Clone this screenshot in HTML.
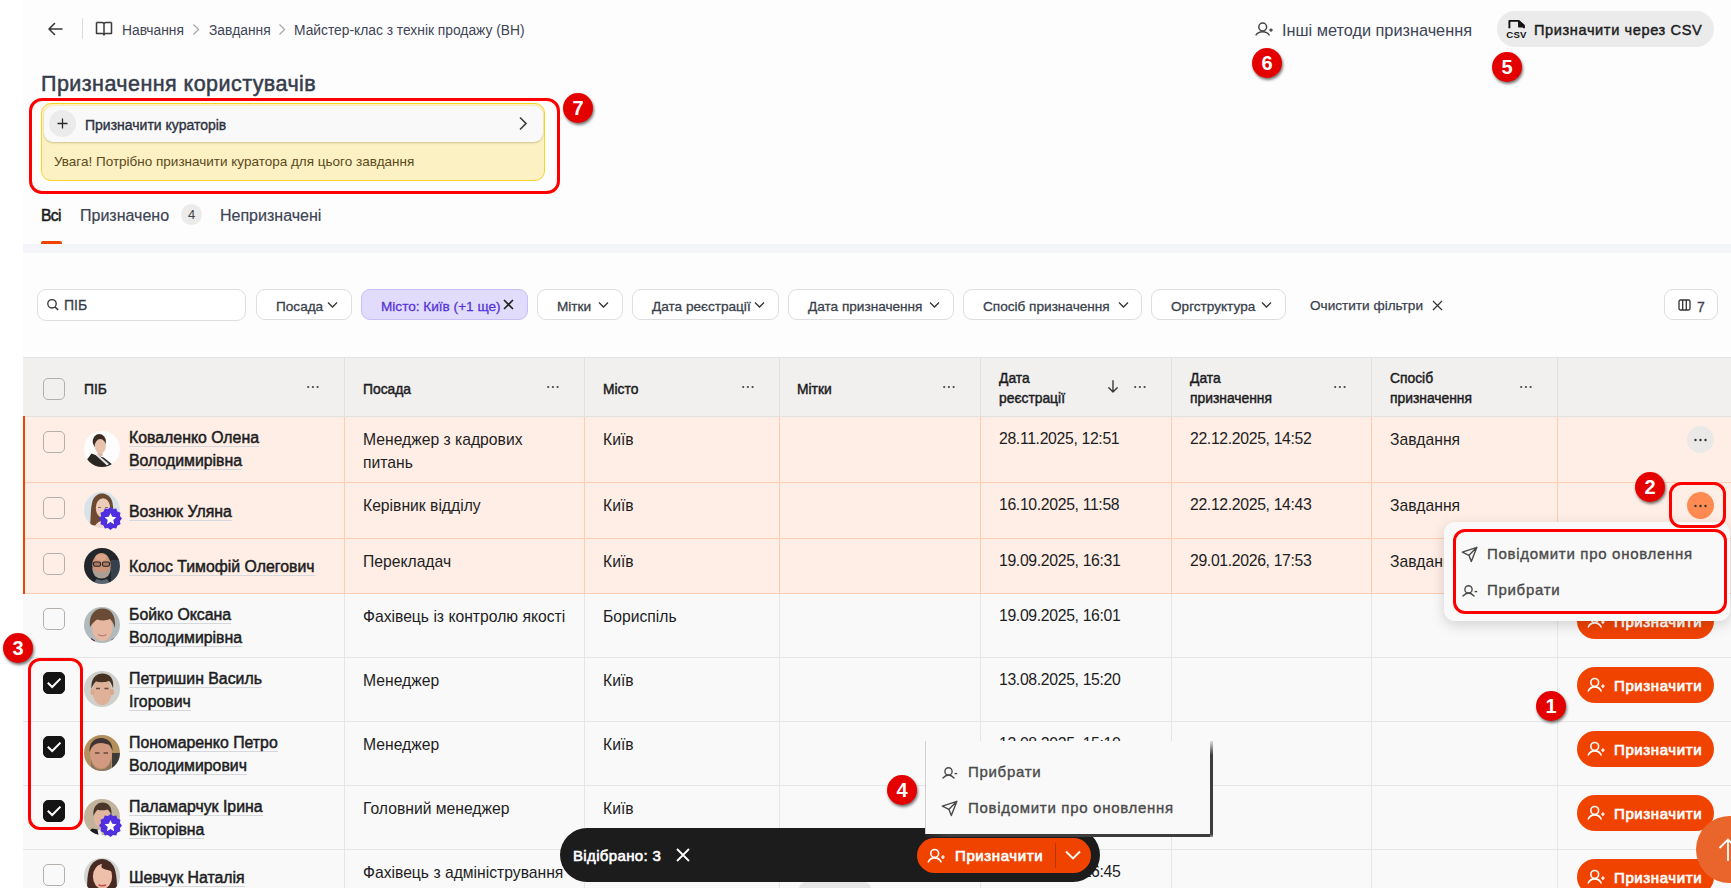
<!DOCTYPE html>
<html><head><meta charset="utf-8">
<style>
*{box-sizing:border-box;margin:0;padding:0}
html,body{width:1731px;height:888px;overflow:hidden;background:#fff}
body{font-family:"Liberation Sans",sans-serif;color:#1d1d1f;position:relative}
.a{position:absolute;white-space:nowrap}
#main{position:absolute;left:23px;top:0;width:1708px;height:888px;background:#fdfdfd}
.crumb{font-size:13.8px;color:#3d4455;top:23px}
.sep{color:#a9a9a9}
.badge{position:absolute;width:30px;height:30px;border-radius:50%;background:#e50000;color:#fff;font-weight:700;font-size:20px;text-align:center;line-height:30px;box-shadow:1px 2px 3px rgba(0,0,0,.55)}
.redbox{position:absolute;border:3px solid #ff0000;border-radius:13px}
.chip{position:absolute;top:289px;height:31px;border:1px solid #dedede;border-radius:9px;background:#fff;font-size:13.6px;color:#3a3f4b}
.chip span{position:absolute;top:8.5px;-webkit-text-stroke-width:0.3px}
.hdr{position:absolute;top:357px;left:23px;width:1708px;height:60px;background:#f1f0ef;border-top:1px solid #e6e4e2;border-bottom:1px solid #e3e1df}
.ht{position:absolute;font-size:13.85px;-webkit-text-stroke-width:0.45px;color:#1d1d1f;line-height:20px}
.dots{position:absolute;font-size:14px;color:#555;letter-spacing:1px}
.vl{position:absolute;width:1px}
.row{position:absolute;left:23px;width:1708px}
.cb{position:absolute;left:43px;width:22px;height:22px;border:1.5px solid #b4afab;border-radius:5px}
.cbk{background:#141414;border-color:#141414}
.nm{position:absolute;left:129px;font-size:15.85px;-webkit-text-stroke-width:0.5px;line-height:23px;color:#1d1d1f}
.nm u{text-decoration:none;border-bottom:1px solid #d6d8db}
.tx{position:absolute;font-size:15.7px;line-height:23.5px;color:#1d1d1f}
.btn{position:absolute;left:1577px;width:137px;height:36px;border-radius:18px;background:#f04300;color:#fff;font-size:15px;letter-spacing:0.6px;-webkit-text-stroke-width:0.7px}
.btn span{position:absolute;left:37px;top:10px}
.btn svg{position:absolute;left:10px;top:9px}
</style></head><body>
<div id="main"></div>

<!-- top bar -->
<svg class="a" style="left:47px;top:22px" width="16" height="14" viewBox="0 0 16 14"><path d="M15 7H2M7.5 1.5L2 7l5.5 5.5" fill="none" stroke="#3a3a3a" stroke-width="1.6" stroke-linecap="round" stroke-linejoin="round"/></svg>
<div class="a" style="left:82px;top:18px;width:1px;height:21px;background:#dcdcdc"></div>
<svg class="a" style="left:95px;top:21px" width="18" height="16" viewBox="0 0 18 16"><path d="M1.5 1.5h5.5c1 0 2 .8 2 2v10.5M16.5 1.5H11c-1 0-2 .8-2 2M1.5 1.5v11h5.8c.9 0 1.7.6 1.7 1.5 0-.9.8-1.5 1.7-1.5h5.8v-11" fill="none" stroke="#3a3a3a" stroke-width="1.5" stroke-linejoin="round"/></svg>
<div class="a crumb" style="left:122px">Навчання</div>
<svg class="a" style="left:192px;top:23px" width="8" height="13" viewBox="0 0 8 13"><path d="M1.5 1.5l5 5-5 5" fill="none" stroke="#a8a8a8" stroke-width="1.3"/></svg>
<div class="a crumb" style="left:209px">Завдання</div>
<svg class="a" style="left:278px;top:23px" width="8" height="13" viewBox="0 0 8 13"><path d="M1.5 1.5l5 5-5 5" fill="none" stroke="#a8a8a8" stroke-width="1.3"/></svg>
<div class="a crumb" style="left:294px">Майстер-клас з технік продажу (ВН)</div>

<svg class="a" style="left:1255px;top:22px" width="19" height="15" viewBox="0 0 19 15"><circle cx="7.7" cy="5" r="3.9" fill="none" stroke="#444" stroke-width="1.5"/><path d="M1.1 12.9c1.3-2.1 3.6-3.2 6.5-3.2s5.2 1.1 6.5 3.2" fill="none" stroke="#444" stroke-width="1.5" stroke-linecap="round"/><path d="M16 6.4v3.4M14.3 8.1h3.4" stroke="#444" stroke-width="1.5"/></svg>
<div class="a" style="left:1282px;top:21px;font-size:16.3px;color:#3d4455">Інші методи призначення</div>
<div class="a" style="left:1497px;top:11px;width:217px;height:36px;border-radius:18px;background:#ebebeb"></div>
<svg class="a" style="left:1506px;top:18px" width="21" height="22" viewBox="0 0 21 22"><path d="M3.4 10.2V2.9h9.3l5.2 4.5v2.8" fill="none" stroke="#111" stroke-width="1.9" stroke-linejoin="round"/><path d="M12.7 2.9v5.9h5.2z" fill="#111" stroke="#111" stroke-width="1.2" stroke-linejoin="round"/><text x="10.5" y="19.6" font-family="Liberation Sans" font-weight="700" font-size="9.6" text-anchor="middle" letter-spacing="0.2" fill="#111">CSV</text></svg>
<div class="a" style="left:1534px;top:21.5px;font-size:14.6px;letter-spacing:0.6px;-webkit-text-stroke-width:0.45px;color:#1d1d1f">Призначити через CSV</div>
<div class="badge" style="left:1252px;top:48px">6</div>
<div class="badge" style="left:1492px;top:52px">5</div>

<!-- title -->
<div class="a" style="left:41px;top:71.5px;font-size:21.5px;letter-spacing:0.45px;-webkit-text-stroke:0.5px #363c4b;color:#363c4b">Призначення користувачів</div>

<!-- curator box -->
<div class="a" style="left:41px;top:103px;width:504px;height:78px;border:1px solid #f8d427;border-radius:10px;background:#fcf1c2"></div>
<div class="a" style="left:44px;top:106px;width:499px;height:36px;border-radius:9px;background:#f9f9f9;box-shadow:0 1px 2px rgba(120,100,40,.35)"></div>
<div class="a" style="left:49px;top:110px;width:27px;height:27px;border-radius:50%;background:#ebebeb"></div>
<svg class="a" style="left:56px;top:117px" width="13" height="13" viewBox="0 0 13 13"><path d="M6.5 1.5v10M1.5 6.5h10" stroke="#2a2a2a" stroke-width="1.3"/></svg>
<div class="a" style="left:85px;top:117px;font-size:14px;-webkit-text-stroke:0.35px #2c3140;color:#2c3140">Призначити кураторів</div>
<svg class="a" style="left:518px;top:116px" width="10" height="15" viewBox="0 0 10 15"><path d="M2 1.5l6 6-6 6" fill="none" stroke="#3a3a3a" stroke-width="1.6"/></svg>
<div class="a" style="left:54px;top:154px;font-size:13.5px;color:#5a4a20">Увага! Потрібно призначити куратора для цього завдання</div>
<div class="redbox" style="left:29px;top:98px;width:531px;height:96px"></div>
<div class="badge" style="left:563px;top:93px">7</div>

<!-- tabs -->
<div class="a" style="left:41px;top:207px;font-size:15.6px;letter-spacing:-0.6px;-webkit-text-stroke-width:0.5px;color:#1a1a1a;color:#1a1a1a">Всі</div>
<div class="a" style="left:80px;top:207px;font-size:16px;color:#3d4455;-webkit-text-stroke-width:0.2px">Призначено</div>
<div class="a" style="left:181px;top:204px;width:21px;height:21px;border-radius:50%;background:#ebebeb;font-size:13px;color:#444;text-align:center;line-height:21px">4</div>
<div class="a" style="left:220px;top:207px;font-size:16px;color:#3d4455;-webkit-text-stroke-width:0.2px">Непризначені</div>
<div class="a" style="left:41px;top:241px;width:21px;height:3px;border-radius:2px 2px 0 0;background:#f04300"></div>
<div class="a" style="left:23px;top:244px;width:1708px;height:9px;background:#f4f5f8"></div>

<!-- filters -->
<div class="a" style="left:37px;top:289px;width:209px;height:32px;border:1px solid #dedede;border-radius:9px;background:#fff"></div>
<svg class="a" style="left:46px;top:298px" width="14" height="14" viewBox="0 0 14 14"><circle cx="6" cy="5.8" r="4.2" fill="none" stroke="#333" stroke-width="1.3"/><path d="M9.1 8.9l3.1 3.2" stroke="#333" stroke-width="1.5"/></svg>
<div class="a" style="left:64px;top:297px;font-size:14px;color:#3a3f4b;-webkit-text-stroke-width:0.3px">ПІБ</div>

<div class="chip" style="left:256px;width:96px"><span style="left:19px">Посада</span></div>
<div class="chip" style="left:361px;width:167px;background:#e1dcfc;border-color:#c8bff7;color:#5634d8"><span style="left:19px">Місто: Київ (+1 ще)</span></div>
<div class="chip" style="left:537px;width:86px"><span style="left:19px">Мітки</span></div>
<div class="chip" style="left:632px;width:147px"><span style="left:19px">Дата реєстрації</span></div>
<div class="chip" style="left:788px;width:166px"><span style="left:19px">Дата призначення</span></div>
<div class="chip" style="left:963px;width:179px"><span style="left:19px">Спосіб призначення</span></div>
<div class="chip" style="left:1151px;width:135px"><span style="left:19px">Оргструктура</span></div>
<div class="a" style="left:1310px;top:297.5px;font-size:13.6px;color:#3a3f4b;-webkit-text-stroke-width:0.25px">Очистити фільтри</div>
<div class="chip" style="left:1664px;width:54px"><span style="left:32px;font-size:14px">7</span></div>
<svg class="a" style="left:327px;top:301px" width="11" height="8" viewBox="0 0 11 8"><path d="M1 1.5l4.5 4.5L10 1.5" fill="none" stroke="#333" stroke-width="1.25"/></svg><svg class="a" style="left:598px;top:301px" width="11" height="8" viewBox="0 0 11 8"><path d="M1 1.5l4.5 4.5L10 1.5" fill="none" stroke="#333" stroke-width="1.25"/></svg><svg class="a" style="left:754px;top:301px" width="11" height="8" viewBox="0 0 11 8"><path d="M1 1.5l4.5 4.5L10 1.5" fill="none" stroke="#333" stroke-width="1.25"/></svg><svg class="a" style="left:929px;top:301px" width="11" height="8" viewBox="0 0 11 8"><path d="M1 1.5l4.5 4.5L10 1.5" fill="none" stroke="#333" stroke-width="1.25"/></svg><svg class="a" style="left:1118px;top:301px" width="11" height="8" viewBox="0 0 11 8"><path d="M1 1.5l4.5 4.5L10 1.5" fill="none" stroke="#333" stroke-width="1.25"/></svg><svg class="a" style="left:1261px;top:301px" width="11" height="8" viewBox="0 0 11 8"><path d="M1 1.5l4.5 4.5L10 1.5" fill="none" stroke="#333" stroke-width="1.25"/></svg><svg class="a" style="left:503px;top:299px" width="11" height="11" viewBox="0 0 11 11"><path d="M1 1l9 9M10 1L1 10" stroke="#222" stroke-width="1.6"/></svg><svg class="a" style="left:1432px;top:300px" width="11" height="11" viewBox="0 0 11 11"><path d="M1 1l9 9M10 1L1 10" stroke="#333" stroke-width="1.2"/></svg><svg class="a" style="left:1678px;top:299px" width="13" height="12" viewBox="0 0 13 12"><rect x="1" y="1" width="11" height="10" rx="1.5" fill="none" stroke="#333" stroke-width="1.3"/><path d="M4.7 1v10M8.3 1v10" stroke="#333" stroke-width="1.3"/></svg>

<div class="hdr"></div>
<div class="vl" style="left:344px;top:357px;height:59px;background:#e3e1df"></div>
<div class="vl" style="left:584px;top:357px;height:59px;background:#e3e1df"></div>
<div class="vl" style="left:779px;top:357px;height:59px;background:#e3e1df"></div>
<div class="vl" style="left:980px;top:357px;height:59px;background:#e3e1df"></div>
<div class="vl" style="left:1171px;top:357px;height:59px;background:#e3e1df"></div>
<div class="vl" style="left:1371px;top:357px;height:59px;background:#e3e1df"></div>
<div class="vl" style="left:1557px;top:357px;height:59px;background:#e3e1df"></div>
<div class="cb" style="top:378px"></div>
<div class="ht a" style="left:84px;top:378.5px">ПІБ</div>
<svg class="a" style="left:305.5px;top:385px" width="14" height="4" viewBox="0 0 14 4"><circle cx="2.2" cy="2" r="1.1" fill="#444"/><circle cx="6.9" cy="2" r="1.1" fill="#444"/><circle cx="11.6" cy="2" r="1.1" fill="#444"/></svg>
<div class="ht a" style="left:363px;top:378.5px">Посада</div>
<svg class="a" style="left:545.5px;top:385px" width="14" height="4" viewBox="0 0 14 4"><circle cx="2.2" cy="2" r="1.1" fill="#444"/><circle cx="6.9" cy="2" r="1.1" fill="#444"/><circle cx="11.6" cy="2" r="1.1" fill="#444"/></svg>
<div class="ht a" style="left:603px;top:378.5px">Місто</div>
<svg class="a" style="left:740.5px;top:385px" width="14" height="4" viewBox="0 0 14 4"><circle cx="2.2" cy="2" r="1.1" fill="#444"/><circle cx="6.9" cy="2" r="1.1" fill="#444"/><circle cx="11.6" cy="2" r="1.1" fill="#444"/></svg>
<div class="ht a" style="left:797px;top:378.5px">Мітки</div>
<svg class="a" style="left:941.5px;top:385px" width="14" height="4" viewBox="0 0 14 4"><circle cx="2.2" cy="2" r="1.1" fill="#444"/><circle cx="6.9" cy="2" r="1.1" fill="#444"/><circle cx="11.6" cy="2" r="1.1" fill="#444"/></svg>
<div class="ht a" style="left:999px;top:368px">Дата<br>реєстрації</div>
<svg class="a" style="left:1132.5px;top:385px" width="14" height="4" viewBox="0 0 14 4"><circle cx="2.2" cy="2" r="1.1" fill="#444"/><circle cx="6.9" cy="2" r="1.1" fill="#444"/><circle cx="11.6" cy="2" r="1.1" fill="#444"/></svg>
<svg class="a" style="left:1107px;top:378px" width="12" height="16" viewBox="0 0 12 16"><path d="M6 2.8v11.2M1.8 9.8L6 14l4.2-4.2" fill="none" stroke="#3a3a3a" stroke-width="1.4" stroke-linecap="round" stroke-linejoin="round"/></svg>
<div class="ht a" style="left:1190px;top:368px">Дата<br>призначення</div>
<svg class="a" style="left:1332.5px;top:385px" width="14" height="4" viewBox="0 0 14 4"><circle cx="2.2" cy="2" r="1.1" fill="#444"/><circle cx="6.9" cy="2" r="1.1" fill="#444"/><circle cx="11.6" cy="2" r="1.1" fill="#444"/></svg>
<div class="ht a" style="left:1390px;top:368px">Спосіб<br>призначення</div>
<svg class="a" style="left:1518.5px;top:385px" width="14" height="4" viewBox="0 0 14 4"><circle cx="2.2" cy="2" r="1.1" fill="#444"/><circle cx="6.9" cy="2" r="1.1" fill="#444"/><circle cx="11.6" cy="2" r="1.1" fill="#444"/></svg>
<div class="row" style="top:417px;height:66px;background:#ffeee5;border-bottom:1px solid #fdcdb2"></div>
<div class="vl" style="left:344px;top:417px;height:66px;background:#fdcdb2"></div>
<div class="vl" style="left:584px;top:417px;height:66px;background:#fdcdb2"></div>
<div class="vl" style="left:779px;top:417px;height:66px;background:#fdcdb2"></div>
<div class="vl" style="left:980px;top:417px;height:66px;background:#fdcdb2"></div>
<div class="vl" style="left:1171px;top:417px;height:66px;background:#fdcdb2"></div>
<div class="vl" style="left:1371px;top:417px;height:66px;background:#fdcdb2"></div>
<div class="vl" style="left:1557px;top:417px;height:66px;background:#fdcdb2"></div>
<div class="a" style="left:23px;top:416px;width:2px;height:67px;background:#f04300"></div>
<div class="cb" style="top:431px"></div>
<svg class="a" style="left:84px;top:431px" width="36" height="36" viewBox="0 0 36 36"><defs><clipPath id="c1"><circle cx="18" cy="18" r="18"/></clipPath><filter id="f1" x="-10%" y="-10%" width="120%" height="120%"><feGaussianBlur stdDeviation="0.55"/></filter></defs><g clip-path="url(#c1)"><g filter="url(#f1)"><rect x="-2" y="-2" width="40" height="40" fill="#fdfdfd"/><ellipse cx="15.3" cy="10.5" rx="6.6" ry="7.6" fill="#3d2b22"/><rect x="13.5" y="19" width="5" height="6" fill="#e0b8a2"/><ellipse cx="16.3" cy="15.2" rx="5.6" ry="7.1" fill="#e8c3ad"/><path d="M2 30l5.5-7.5 4 1.5 8 2.5 9.5 7.5-3 4H4z" fill="#2a2523"/><path d="M10 22.5l3 .5 12 10-2 1.5z" fill="#e8e8e8"/></g></g></svg>
<div class="nm" style="top:426.0px"><u>Коваленко Олена</u><br><u>Володимирівна</u></div>
<div class="tx a" style="left:363px;top:427.5px">Менеджер з кадрових<br>питань</div>
<div class="tx a" style="left:603px;top:427.5px">Київ</div>
<div class="tx a" style="left:999px;top:427.0px;font-size:15.8px;letter-spacing:-0.35px">28.11.2025, 12:51</div>
<div class="tx a" style="left:1190px;top:427.0px;font-size:15.8px;letter-spacing:-0.35px">22.12.2025, 14:52</div>
<div class="tx a" style="left:1390px;top:427.5px">Завдання</div>
<div class="a" style="left:1687px;top:426px;width:27px;height:27px;border-radius:50%;background:#ebe9e7"></div>
<svg class="a" style="left:1693px;top:438px" width="15" height="4" viewBox="0 0 15 4"><circle cx="2.5" cy="2" r="1.2" fill="#333"/><circle cx="7.5" cy="2" r="1.2" fill="#333"/><circle cx="12.5" cy="2" r="1.2" fill="#333"/></svg>
<div class="row" style="top:483px;height:56px;background:#ffeee5;border-bottom:1px solid #fdcdb2"></div>
<div class="vl" style="left:344px;top:483px;height:56px;background:#fdcdb2"></div>
<div class="vl" style="left:584px;top:483px;height:56px;background:#fdcdb2"></div>
<div class="vl" style="left:779px;top:483px;height:56px;background:#fdcdb2"></div>
<div class="vl" style="left:980px;top:483px;height:56px;background:#fdcdb2"></div>
<div class="vl" style="left:1171px;top:483px;height:56px;background:#fdcdb2"></div>
<div class="vl" style="left:1371px;top:483px;height:56px;background:#fdcdb2"></div>
<div class="vl" style="left:1557px;top:483px;height:56px;background:#fdcdb2"></div>
<div class="a" style="left:23px;top:482px;width:2px;height:57px;background:#f04300"></div>
<div class="cb" style="top:497px"></div>
<svg class="a" style="left:84px;top:492px" width="36" height="36" viewBox="0 0 36 36"><defs><clipPath id="c2"><circle cx="18" cy="18" r="18"/></clipPath><filter id="f2" x="-10%" y="-10%" width="120%" height="120%"><feGaussianBlur stdDeviation="0.55"/></filter></defs><g clip-path="url(#c2)"><g filter="url(#f2)"><rect x="-2" y="-2" width="40" height="40" fill="#d8e2e9"/><path d="M6 33c1-8 .5-16 2-22 1.5-7 6-9.5 10-9.5s9 2.5 10.5 9c1.2 6 .5 12 1.5 18l-6 6z" fill="#6e4a33"/><ellipse cx="19" cy="16" rx="7.2" ry="9.8" fill="#edcbb9"/><path d="M10 38c1-6 4-9 9-9s8 3 9 9z" fill="#f0d9cc"/><path d="M14 15.5h3M21 15.5h3" stroke="#8a6a5a" stroke-width="1"/></g></g></svg>
<svg class="a" style="left:99px;top:507px" width="23" height="23" viewBox="0 0 23 23"><polygon points="11.50,0.00 14.04,2.03 17.25,1.54 18.43,4.57 21.46,5.75 20.97,8.96 23.00,11.50 20.97,14.04 21.46,17.25 18.43,18.43 17.25,21.46 14.04,20.97 11.50,23.00 8.96,20.97 5.75,21.46 4.57,18.43 1.54,17.25 2.03,14.04 0.00,11.50 2.03,8.96 1.54,5.75 4.57,4.57 5.75,1.54 8.96,2.03" fill="#4f2fe0" stroke="#fff" stroke-width="0"/><polygon points="11.50,6.00 13.20,9.85 17.40,10.28 14.26,13.10 15.14,17.22 11.50,15.10 7.86,17.22 8.74,13.10 5.60,10.28 9.80,9.85" fill="#fff"/></svg>
<div class="nm" style="top:499.5px"><u>Вознюк Уляна</u></div>
<div class="tx a" style="left:363px;top:493.5px">Керівник відділу</div>
<div class="tx a" style="left:603px;top:493.5px">Київ</div>
<div class="tx a" style="left:999px;top:493.0px;font-size:15.8px;letter-spacing:-0.35px">16.10.2025, 11:58</div>
<div class="tx a" style="left:1190px;top:493.0px;font-size:15.8px;letter-spacing:-0.35px">22.12.2025, 14:43</div>
<div class="tx a" style="left:1390px;top:493.5px">Завдання</div>
<div class="a" style="left:1687px;top:492px;width:27px;height:27px;border-radius:50%;background:#ff8b52"></div>
<svg class="a" style="left:1693px;top:504px" width="15" height="4" viewBox="0 0 15 4"><circle cx="2.5" cy="2" r="1.2" fill="#333"/><circle cx="7.5" cy="2" r="1.2" fill="#333"/><circle cx="12.5" cy="2" r="1.2" fill="#333"/></svg>
<div class="row" style="top:539px;height:55px;background:#ffeee5;border-bottom:1px solid #fdcdb2"></div>
<div class="vl" style="left:344px;top:539px;height:55px;background:#fdcdb2"></div>
<div class="vl" style="left:584px;top:539px;height:55px;background:#fdcdb2"></div>
<div class="vl" style="left:779px;top:539px;height:55px;background:#fdcdb2"></div>
<div class="vl" style="left:980px;top:539px;height:55px;background:#fdcdb2"></div>
<div class="vl" style="left:1171px;top:539px;height:55px;background:#fdcdb2"></div>
<div class="vl" style="left:1371px;top:539px;height:55px;background:#fdcdb2"></div>
<div class="vl" style="left:1557px;top:539px;height:55px;background:#fdcdb2"></div>
<div class="a" style="left:23px;top:538px;width:2px;height:56px;background:#f04300"></div>
<div class="cb" style="top:553px"></div>
<svg class="a" style="left:84px;top:548px" width="36" height="36" viewBox="0 0 36 36"><defs><clipPath id="c3"><circle cx="18" cy="18" r="18"/></clipPath><filter id="f3" x="-10%" y="-10%" width="120%" height="120%"><feGaussianBlur stdDeviation="0.55"/></filter></defs><g clip-path="url(#c3)"><g filter="url(#f3)"><rect x="-2" y="-2" width="40" height="40" fill="#22272a"/><rect x="27" y="12" width="11" height="26" fill="#35424e"/><ellipse cx="17.5" cy="17.5" rx="9.3" ry="12.5" fill="#cb957a"/><ellipse cx="17" cy="9.5" rx="5.5" ry="3.5" fill="#dba58a"/><path d="M8.3 20Q8.5 30 17.5 30.5Q26.5 30 26.7 20Q22 24.5 17.5 24.5Q13 24.5 8.3 20z" fill="#aa9e95"/><rect x="9.5" y="14" width="7" height="4.2" rx="1.5" fill="#6a4a40" fill-opacity=".35" stroke="#2a2222" stroke-width="1.1"/><rect x="18.5" y="14" width="7" height="4.2" rx="1.5" fill="#6a4a40" fill-opacity=".35" stroke="#2a2222" stroke-width="1.1"/><path d="M8 38l4.5-7 5 1.5 5.5-1.5 5 7z" fill="#5a6470"/></g></g></svg>
<div class="nm" style="top:555.0px"><u>Колос Тимофій Олегович</u></div>
<div class="tx a" style="left:363px;top:549.5px">Перекладач</div>
<div class="tx a" style="left:603px;top:549.5px">Київ</div>
<div class="tx a" style="left:999px;top:549.0px;font-size:15.8px;letter-spacing:-0.35px">19.09.2025, 16:31</div>
<div class="tx a" style="left:1190px;top:549.0px;font-size:15.8px;letter-spacing:-0.35px">29.01.2026, 17:53</div>
<div class="tx a" style="left:1390px;top:549.5px">Завдання</div>
<div class="row" style="top:594px;height:64px;background:#f9f9f9;border-bottom:1px solid #e6e6e6"></div>
<div class="vl" style="left:344px;top:594px;height:64px;background:#e6e6e6"></div>
<div class="vl" style="left:584px;top:594px;height:64px;background:#e6e6e6"></div>
<div class="vl" style="left:779px;top:594px;height:64px;background:#e6e6e6"></div>
<div class="vl" style="left:980px;top:594px;height:64px;background:#e6e6e6"></div>
<div class="vl" style="left:1171px;top:594px;height:64px;background:#e6e6e6"></div>
<div class="vl" style="left:1371px;top:594px;height:64px;background:#e6e6e6"></div>
<div class="vl" style="left:1557px;top:594px;height:64px;background:#e6e6e6"></div>
<div class="cb" style="top:608px"></div>
<svg class="a" style="left:84px;top:607px" width="36" height="36" viewBox="0 0 36 36"><defs><clipPath id="c4"><circle cx="18" cy="18" r="18"/></clipPath><filter id="f4" x="-10%" y="-10%" width="120%" height="120%"><feGaussianBlur stdDeviation="0.55"/></filter></defs><g clip-path="url(#c4)"><g filter="url(#f4)"><rect x="-2" y="-2" width="40" height="40" fill="#b3babc"/><ellipse cx="18.3" cy="20.5" rx="10.2" ry="13.5" fill="#e6b8a2"/><path d="M6 20c-1.5-11 4-18.5 12.5-18.5S32 8 31 21c-1.5-5-3.5-8-5-9-3 1.5-8 2-13 .5-2.5 1.5-5 4.5-7 7.5z" fill="#6a4b35"/><path d="M7 31l4 2.5-1.5 4H5zM27 33l3-2 1 5h-4z" fill="#5e2226"/><path d="M14 27.5c2.5 1.5 6 1.5 8.5 0" stroke="#b77" stroke-width="1.2" fill="none"/></g></g></svg>
<div class="nm" style="top:603.0px"><u>Бойко Оксана</u><br><u>Володимирівна</u></div>
<div class="tx a" style="left:363px;top:604.5px">Фахівець із контролю якості</div>
<div class="tx a" style="left:603px;top:604.5px">Бориспіль</div>
<div class="tx a" style="left:999px;top:604.0px;font-size:15.8px;letter-spacing:-0.35px">19.09.2025, 16:01</div>
<div class="btn" style="top:603px"><svg width="19" height="16" viewBox="0 0 19 16"><circle cx="7.7" cy="6.4" r="3.9" fill="none" stroke="#fff" stroke-width="1.6"/><path d="M1.3 14.9c1.3-2.6 3.6-4 6.4-4s5.1 1.4 6.4 4" fill="none" stroke="#fff" stroke-width="1.6" stroke-linecap="round"/><path d="M15.9 8.3v3.6M14.1 10.1h3.6" stroke="#fff" stroke-width="1.4"/></svg><span>Призначити</span></div>
<div class="row" style="top:658px;height:64px;background:#f9f9f9;border-bottom:1px solid #e6e6e6"></div>
<div class="vl" style="left:344px;top:658px;height:64px;background:#e6e6e6"></div>
<div class="vl" style="left:584px;top:658px;height:64px;background:#e6e6e6"></div>
<div class="vl" style="left:779px;top:658px;height:64px;background:#e6e6e6"></div>
<div class="vl" style="left:980px;top:658px;height:64px;background:#e6e6e6"></div>
<div class="vl" style="left:1171px;top:658px;height:64px;background:#e6e6e6"></div>
<div class="vl" style="left:1371px;top:658px;height:64px;background:#e6e6e6"></div>
<div class="vl" style="left:1557px;top:658px;height:64px;background:#e6e6e6"></div>
<div class="cb cbk" style="top:672px"></div>
<svg class="a" style="left:43px;top:672px" width="23" height="23" viewBox="0 0 23 23"><path d="M4.8 10.8l4.4 4.2 8.3-8.4" fill="none" stroke="#fff" stroke-width="2" stroke-linecap="butt" stroke-linejoin="miter"/></svg>
<svg class="a" style="left:84px;top:671px" width="36" height="36" viewBox="0 0 36 36"><defs><clipPath id="c5"><circle cx="18" cy="18" r="18"/></clipPath><filter id="f5" x="-10%" y="-10%" width="120%" height="120%"><feGaussianBlur stdDeviation="0.55"/></filter></defs><g clip-path="url(#c5)"><g filter="url(#f5)"><rect x="-2" y="-2" width="40" height="40" fill="#cfd0cc"/><ellipse cx="18.2" cy="21" rx="9.6" ry="13.2" fill="#dfb199"/><ellipse cx="8.5" cy="21" rx="2" ry="3" fill="#d8a890"/><ellipse cx="28" cy="21" rx="2" ry="3" fill="#d8a890"/><path d="M7.5 18c-1-10 4-15.5 11-15.5s12 5 10.5 15c-1-4-2.5-6.5-4-7.5-4 1.5-9 1.5-13 .5-2 1.5-3.5 4.5-4.5 7.5z" fill="#473124"/><path d="M12 17.5h4M20.5 17.5h4" stroke="#6a4a3a" stroke-width="1.3"/></g></g></svg>
<div class="nm" style="top:667.0px"><u>Петришин Василь</u><br><u>Ігорович</u></div>
<div class="tx a" style="left:363px;top:668.5px">Менеджер</div>
<div class="tx a" style="left:603px;top:668.5px">Київ</div>
<div class="tx a" style="left:999px;top:668.0px;font-size:15.8px;letter-spacing:-0.35px">13.08.2025, 15:20</div>
<div class="btn" style="top:667px"><svg width="19" height="16" viewBox="0 0 19 16"><circle cx="7.7" cy="6.4" r="3.9" fill="none" stroke="#fff" stroke-width="1.6"/><path d="M1.3 14.9c1.3-2.6 3.6-4 6.4-4s5.1 1.4 6.4 4" fill="none" stroke="#fff" stroke-width="1.6" stroke-linecap="round"/><path d="M15.9 8.3v3.6M14.1 10.1h3.6" stroke="#fff" stroke-width="1.4"/></svg><span>Призначити</span></div>
<div class="row" style="top:722px;height:64px;background:#f9f9f9;border-bottom:1px solid #e6e6e6"></div>
<div class="vl" style="left:344px;top:722px;height:64px;background:#e6e6e6"></div>
<div class="vl" style="left:584px;top:722px;height:64px;background:#e6e6e6"></div>
<div class="vl" style="left:779px;top:722px;height:64px;background:#e6e6e6"></div>
<div class="vl" style="left:980px;top:722px;height:64px;background:#e6e6e6"></div>
<div class="vl" style="left:1171px;top:722px;height:64px;background:#e6e6e6"></div>
<div class="vl" style="left:1371px;top:722px;height:64px;background:#e6e6e6"></div>
<div class="vl" style="left:1557px;top:722px;height:64px;background:#e6e6e6"></div>
<div class="cb cbk" style="top:736px"></div>
<svg class="a" style="left:43px;top:736px" width="23" height="23" viewBox="0 0 23 23"><path d="M4.8 10.8l4.4 4.2 8.3-8.4" fill="none" stroke="#fff" stroke-width="2" stroke-linecap="butt" stroke-linejoin="miter"/></svg>
<svg class="a" style="left:84px;top:735px" width="36" height="36" viewBox="0 0 36 36"><defs><clipPath id="c6"><circle cx="18" cy="18" r="18"/></clipPath><filter id="f6" x="-10%" y="-10%" width="120%" height="120%"><feGaussianBlur stdDeviation="0.55"/></filter></defs><g clip-path="url(#c6)"><g filter="url(#f6)"><rect x="-2" y="-2" width="40" height="40" fill="#b38f5b"/><rect x="28" y="18" width="10" height="20" fill="#3e3a36"/><ellipse cx="17" cy="19" rx="11" ry="14.5" fill="#d29a80"/><path d="M5.5 17c-.5-9 4.5-14 11.5-14s12 5 11.5 13c-1-3-2.5-5.5-4-6.5-1.5 0-4-1.5-7.5-1.5S11 9 9 11c-1.5 1.5-2.5 4-3.5 6z" fill="#3f3430"/><path d="M7 24c1.5 7 5 10.5 10 10.5S25.5 31 27 24v9c-2 3-6 5-10 5s-8-2-10-5z" fill="#8a7565"/><path d="M11 18h4.5M19.5 18H24" stroke="#6a4a3a" stroke-width="1.3"/></g></g></svg>
<div class="nm" style="top:731.0px"><u>Пономаренко Петро</u><br><u>Володимирович</u></div>
<div class="tx a" style="left:363px;top:732.5px">Менеджер</div>
<div class="tx a" style="left:603px;top:732.5px">Київ</div>
<div class="tx a" style="left:999px;top:732.0px;font-size:15.8px;letter-spacing:-0.35px">13.08.2025, 15:10</div>
<div class="btn" style="top:731px"><svg width="19" height="16" viewBox="0 0 19 16"><circle cx="7.7" cy="6.4" r="3.9" fill="none" stroke="#fff" stroke-width="1.6"/><path d="M1.3 14.9c1.3-2.6 3.6-4 6.4-4s5.1 1.4 6.4 4" fill="none" stroke="#fff" stroke-width="1.6" stroke-linecap="round"/><path d="M15.9 8.3v3.6M14.1 10.1h3.6" stroke="#fff" stroke-width="1.4"/></svg><span>Призначити</span></div>
<div class="row" style="top:786px;height:64px;background:#f9f9f9;border-bottom:1px solid #e6e6e6"></div>
<div class="vl" style="left:344px;top:786px;height:64px;background:#e6e6e6"></div>
<div class="vl" style="left:584px;top:786px;height:64px;background:#e6e6e6"></div>
<div class="vl" style="left:779px;top:786px;height:64px;background:#e6e6e6"></div>
<div class="vl" style="left:980px;top:786px;height:64px;background:#e6e6e6"></div>
<div class="vl" style="left:1171px;top:786px;height:64px;background:#e6e6e6"></div>
<div class="vl" style="left:1371px;top:786px;height:64px;background:#e6e6e6"></div>
<div class="vl" style="left:1557px;top:786px;height:64px;background:#e6e6e6"></div>
<div class="cb cbk" style="top:800px"></div>
<svg class="a" style="left:43px;top:800px" width="23" height="23" viewBox="0 0 23 23"><path d="M4.8 10.8l4.4 4.2 8.3-8.4" fill="none" stroke="#fff" stroke-width="2" stroke-linecap="butt" stroke-linejoin="miter"/></svg>
<svg class="a" style="left:84px;top:799px" width="36" height="36" viewBox="0 0 36 36"><defs><clipPath id="c7"><circle cx="18" cy="18" r="18"/></clipPath><filter id="f7" x="-10%" y="-10%" width="120%" height="120%"><feGaussianBlur stdDeviation="0.55"/></filter></defs><g clip-path="url(#c7)"><g filter="url(#f7)"><rect x="-2" y="-2" width="40" height="40" fill="#c1b39c"/><ellipse cx="18" cy="18.5" rx="8.2" ry="11" fill="#e0b79e"/><path d="M9.5 17c-1-9 3.5-13.5 9-13.5s10 4 9 13c-1-3-2.5-5-4-6-3 1-7 1.2-10 .3-1.5 1.5-3 3.7-4 6.2z" fill="#4a382c"/><path d="M3 34l5-4.5 6 1 2 8H3z" fill="#1f1f22"/><path d="M13.5 30.5l4 .5 .5 8h-3z" fill="#eeeeee"/></g></g></svg>
<svg class="a" style="left:99px;top:814px" width="23" height="23" viewBox="0 0 23 23"><polygon points="11.50,0.00 14.04,2.03 17.25,1.54 18.43,4.57 21.46,5.75 20.97,8.96 23.00,11.50 20.97,14.04 21.46,17.25 18.43,18.43 17.25,21.46 14.04,20.97 11.50,23.00 8.96,20.97 5.75,21.46 4.57,18.43 1.54,17.25 2.03,14.04 0.00,11.50 2.03,8.96 1.54,5.75 4.57,4.57 5.75,1.54 8.96,2.03" fill="#4f2fe0" stroke="#fff" stroke-width="0"/><polygon points="11.50,6.00 13.20,9.85 17.40,10.28 14.26,13.10 15.14,17.22 11.50,15.10 7.86,17.22 8.74,13.10 5.60,10.28 9.80,9.85" fill="#fff"/></svg>
<div class="nm" style="top:795.0px"><u>Паламарчук Ірина</u><br><u>Вікторівна</u></div>
<div class="tx a" style="left:363px;top:796.5px">Головний менеджер</div>
<div class="tx a" style="left:603px;top:796.5px">Київ</div>
<div class="tx a" style="left:999px;top:796.0px;font-size:15.8px;letter-spacing:-0.35px">13.08.2025, 15:10</div>
<div class="btn" style="top:795px"><svg width="19" height="16" viewBox="0 0 19 16"><circle cx="7.7" cy="6.4" r="3.9" fill="none" stroke="#fff" stroke-width="1.6"/><path d="M1.3 14.9c1.3-2.6 3.6-4 6.4-4s5.1 1.4 6.4 4" fill="none" stroke="#fff" stroke-width="1.6" stroke-linecap="round"/><path d="M15.9 8.3v3.6M14.1 10.1h3.6" stroke="#fff" stroke-width="1.4"/></svg><span>Призначити</span></div>
<div class="row" style="top:850px;height:55px;background:#f9f9f9;border-bottom:1px solid #e6e6e6"></div>
<div class="vl" style="left:344px;top:850px;height:55px;background:#e6e6e6"></div>
<div class="vl" style="left:584px;top:850px;height:55px;background:#e6e6e6"></div>
<div class="vl" style="left:779px;top:850px;height:55px;background:#e6e6e6"></div>
<div class="vl" style="left:980px;top:850px;height:55px;background:#e6e6e6"></div>
<div class="vl" style="left:1171px;top:850px;height:55px;background:#e6e6e6"></div>
<div class="vl" style="left:1371px;top:850px;height:55px;background:#e6e6e6"></div>
<div class="vl" style="left:1557px;top:850px;height:55px;background:#e6e6e6"></div>
<div class="cb" style="top:864px"></div>
<svg class="a" style="left:84px;top:858px" width="36" height="36" viewBox="0 0 36 36"><defs><clipPath id="c8"><circle cx="18" cy="18" r="18"/></clipPath><filter id="f8" x="-10%" y="-10%" width="120%" height="120%"><feGaussianBlur stdDeviation="0.55"/></filter></defs><g clip-path="url(#c8)"><g filter="url(#f8)"><rect x="-2" y="-2" width="40" height="40" fill="#d3d5d5"/><path d="M3 38c0-12 0-22 3-29 2.5-5 7-8 12-8s9.5 3 12 8c3 7 3 17 3 29z" fill="#4a2c22"/><ellipse cx="18.5" cy="18.5" rx="9.6" ry="12.5" fill="#eebfa9"/><path d="M8.5 14c3-5.5 6-8 10-8.5-2 3-1 4.5 1.5 5.5 3 1 6.5 1.5 8.5 3-1-6-4.5-10-10-10s-9.5 4-10 10z" fill="#4a2c22"/><path d="M14.5 27c2.5 1 5 1 7.5 0" stroke="#c04848" stroke-width="1.6" fill="none"/></g></g></svg>
<div class="nm" style="top:866.0px"><u>Шевчук Наталія</u></div>
<div class="tx a" style="left:363px;top:860.5px">Фахівець з адміністрування</div>
<div class="tx a" style="left:603px;top:860.5px">Київ</div>
<div class="tx a" style="left:999px;top:860.0px;font-size:15.8px;letter-spacing:-0.35px">13.06.2025, 16:45</div>
<div class="btn" style="top:859px"><svg width="19" height="16" viewBox="0 0 19 16"><circle cx="7.7" cy="6.4" r="3.9" fill="none" stroke="#fff" stroke-width="1.6"/><path d="M1.3 14.9c1.3-2.6 3.6-4 6.4-4s5.1 1.4 6.4 4" fill="none" stroke="#fff" stroke-width="1.6" stroke-linecap="round"/><path d="M15.9 8.3v3.6M14.1 10.1h3.6" stroke="#fff" stroke-width="1.4"/></svg><span>Призначити</span></div>
<div class="a" style="left:798px;top:881px;width:74px;height:22px;border-radius:11px;background:#e6e6e6"></div>
<div class="redbox" style="left:28px;top:658px;width:55px;height:172px;border-radius:12px"></div>
<div class="badge" style="left:3px;top:633px">3</div>
<div class="a" style="left:1444px;top:522px;width:286px;height:99px;border-radius:11px;background:#f9f9f9;box-shadow:0 4px 14px rgba(0,0,0,.16)"></div>
<svg class="a" style="left:1461px;top:546px" width="18" height="18" viewBox="0 0 18 18"><path d="M15.9 1.3L1.3 6.1l6.6 3.2 2.4 6.2z M15.9 1.3L8 9.3" fill="none" stroke="#4a4a4a" stroke-width="1.4" stroke-linejoin="round"/></svg>
<div class="a" style="left:1487px;top:545.4px;font-size:15px;letter-spacing:0.7px;-webkit-text-stroke-width:0.35px;color:#4a4a4a">Повідомити про оновлення</div>
<svg class="a" style="left:1461px;top:583px" width="18" height="15" viewBox="0 0 18 15"><circle cx="7.5" cy="6.4" r="3.6" fill="none" stroke="#4a4a4a" stroke-width="1.4"/><path d="M2 13Q7.5 7 13 13" fill="none" stroke="#4a4a4a" stroke-width="1.4" stroke-linecap="round"/><path d="M13.6 8.6h2.6" stroke="#4a4a4a" stroke-width="1.4"/></svg>
<div class="a" style="left:1487px;top:581.4px;font-size:15px;letter-spacing:0.7px;-webkit-text-stroke-width:0.35px;color:#4a4a4a">Прибрати</div>
<div class="redbox" style="left:1453px;top:529px;width:274px;height:85px;border-radius:12px"></div>
<div class="redbox" style="left:1669px;top:482px;width:57px;height:46px;border-radius:12px"></div>
<div class="badge" style="left:1635px;top:472px">2</div>
<div class="badge" style="left:1536px;top:691px">1</div>
<div class="a" style="left:1696px;top:816px;width:67px;height:67px;border-radius:50%;background:#e9652c"></div>
<svg class="a" style="left:1718px;top:837px" width="19" height="26" viewBox="0 0 19 26"><path d="M10 24V2.5M1.5 11l8.5-8.5 8.5 8.5" fill="none" stroke="#fff" stroke-width="1.8"/></svg>
<div class="a" style="left:560px;top:828px;width:540px;height:54px;border-radius:27px;background:#1c1c1c"></div>
<div class="a" style="left:573px;top:847px;font-size:15px;letter-spacing:0.35px;-webkit-text-stroke-width:0.6px;color:#fff">Відібрано: 3</div>
<svg class="a" style="left:675px;top:847px" width="16" height="16" viewBox="0 0 16 16"><path d="M2 2l12 12M14 2L2 14" stroke="#fff" stroke-width="1.8"/></svg>
<div class="a" style="left:917px;top:838px;width:174px;height:35px;border-radius:17.5px;background:#f04300"></div>
<svg class="a" style="left:927px;top:847px" width="19" height="16" viewBox="0 0 19 16"><circle cx="7.7" cy="6.4" r="3.9" fill="none" stroke="#fff" stroke-width="1.6"/><path d="M1.3 14.9c1.3-2.6 3.6-4 6.4-4s5.1 1.4 6.4 4" fill="none" stroke="#fff" stroke-width="1.6" stroke-linecap="round"/><path d="M15.9 8.3v3.6M14.1 10.1h3.6" stroke="#fff" stroke-width="1.4"/></svg>
<div class="a" style="left:955px;top:847px;font-size:15px;letter-spacing:0.6px;-webkit-text-stroke-width:0.7px;color:#fff">Призначити</div>
<div class="a" style="left:1055px;top:843px;width:1px;height:25px;background:#b83400"></div>
<svg class="a" style="left:1064px;top:849px" width="18" height="12" viewBox="0 0 18 12"><path d="M2 2.5l7 7 7-7" fill="none" stroke="#fff" stroke-width="1.9"/></svg>
<div class="a" style="left:925px;top:741px;width:285px;height:93px;background:#f9f9f9;border-left:1px solid #d0d0d0"></div>
<div class="a" style="left:1210px;top:741px;width:3px;height:96px;background:linear-gradient(to bottom, rgba(60,60,60,0.15), #3d3d3d 14px, #3d3d3d 93px, rgba(60,60,60,0.5))"></div>
<div class="a" style="left:925px;top:834px;width:285px;height:3px;background:linear-gradient(to right, rgba(60,60,60,0.2), #3d3d3d 22px)"></div>
<svg class="a" style="left:941px;top:765px" width="18" height="15" viewBox="0 0 18 15"><circle cx="7.5" cy="6.4" r="3.6" fill="none" stroke="#4a4a4a" stroke-width="1.4"/><path d="M2 13Q7.5 7 13 13" fill="none" stroke="#4a4a4a" stroke-width="1.4" stroke-linecap="round"/><path d="M13.6 8.6h2.6" stroke="#4a4a4a" stroke-width="1.4"/></svg>
<div class="a" style="left:968px;top:763.4px;font-size:15px;letter-spacing:0.7px;-webkit-text-stroke-width:0.35px;color:#4a4a4a">Прибрати</div>
<svg class="a" style="left:941px;top:800px" width="18" height="18" viewBox="0 0 18 18"><path d="M15.9 1.3L1.3 6.1l6.6 3.2 2.4 6.2z M15.9 1.3L8 9.3" fill="none" stroke="#4a4a4a" stroke-width="1.4" stroke-linejoin="round"/></svg>
<div class="a" style="left:968px;top:799.2px;font-size:15px;letter-spacing:0.7px;-webkit-text-stroke-width:0.35px;color:#4a4a4a">Повідомити про оновлення</div>
<div class="badge" style="left:887px;top:775px">4</div>
</body></html>
